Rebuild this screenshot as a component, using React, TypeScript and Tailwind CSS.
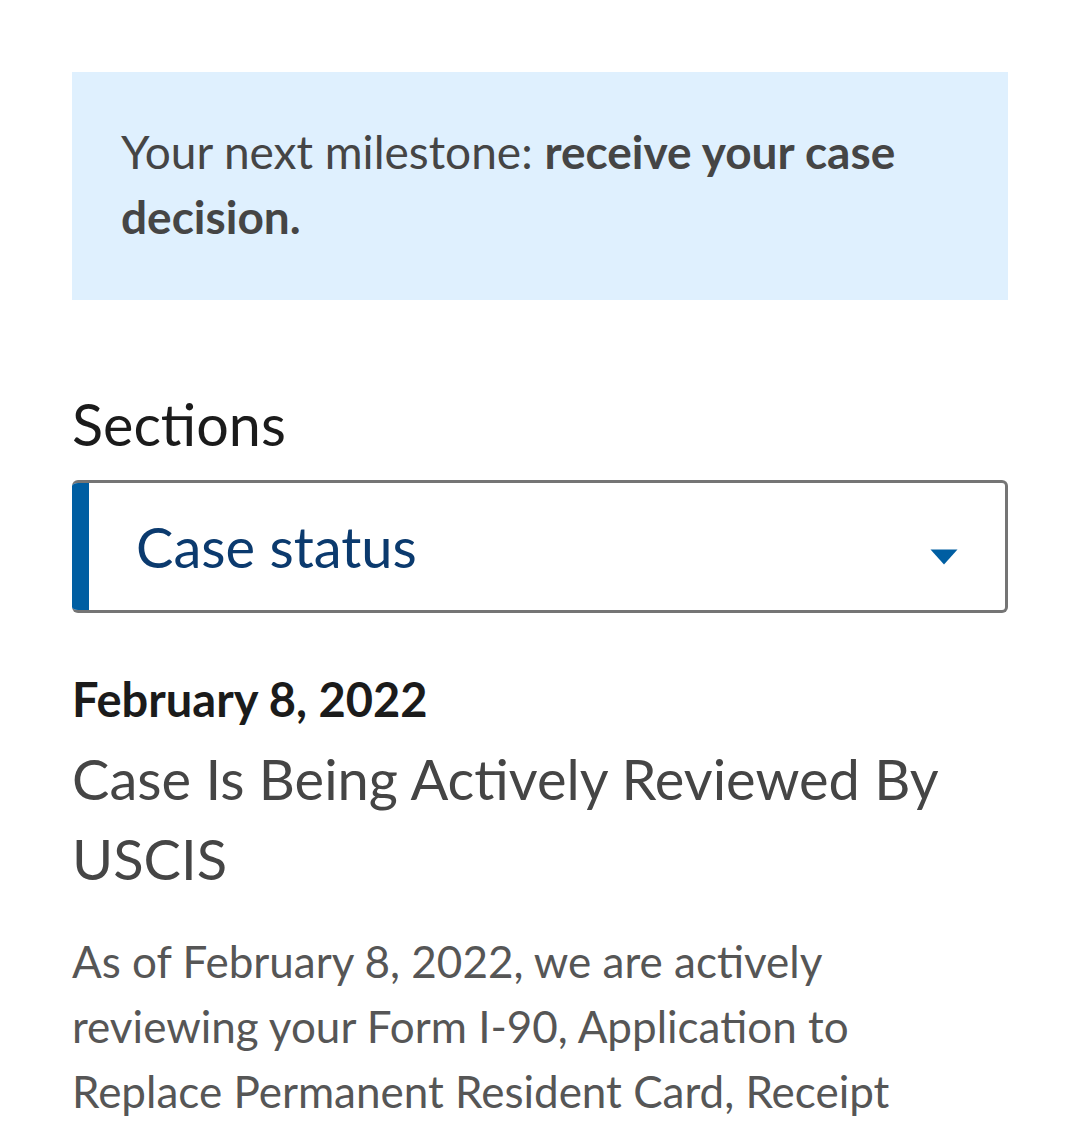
export default function App() {
  return (
    <div className="min-h-[1124px] bg-white px-[72px] pt-[72px] font-['Lato','Liberation_Sans',sans-serif]">
      {/* Milestone banner */}
      <div className="bg-[#dff0fe] px-[49px] pt-[47px] pb-[51px]">
        <p className="text-[46px] leading-[65px] text-[#454545]">
          Your next milestone: <strong className="font-bold">receive your case decision.</strong>
        </p>
      </div>

      {/* Sections select */}
      <h2 className="mt-[92px] text-[57.5px] leading-[64px] text-[#1b1b1b]">Sections</h2>
      <div className="mt-[24px] flex h-[133px] items-center overflow-hidden rounded-[6px] border-[3px] border-l-0 border-[#757575]">
        <div className="h-full w-[17px] bg-[#005ea2]" />
        <span className="ml-[47px] flex-1 text-[56px] text-[#0b3a6e]">Case status</span>
        <svg className="mr-[47px] mt-[20px]" width="28" height="16" viewBox="0 0 28 16">
          <path d="M0.5 0.5h27L14 15.5z" fill="#005ea2" />
        </svg>
      </div>

      {/* Latest status */}
      <div className="mt-[60px] text-[47px] font-bold leading-[52px] text-[#1b1b1b]">February 8, 2022</div>
      <h3 className="mt-[14px] text-[56px] leading-[80px] text-[#454545]">
        Case Is Being Actively Reviewed By USCIS
      </h3>
      <p className="mt-[30px] text-[44px] leading-[65px] text-[#565656]">
        As of February 8, 2022, we are actively reviewing your Form I-90, Application to Replace
        Permanent Resident Card, Receipt Number
      </p>
    </div>
  );
}
